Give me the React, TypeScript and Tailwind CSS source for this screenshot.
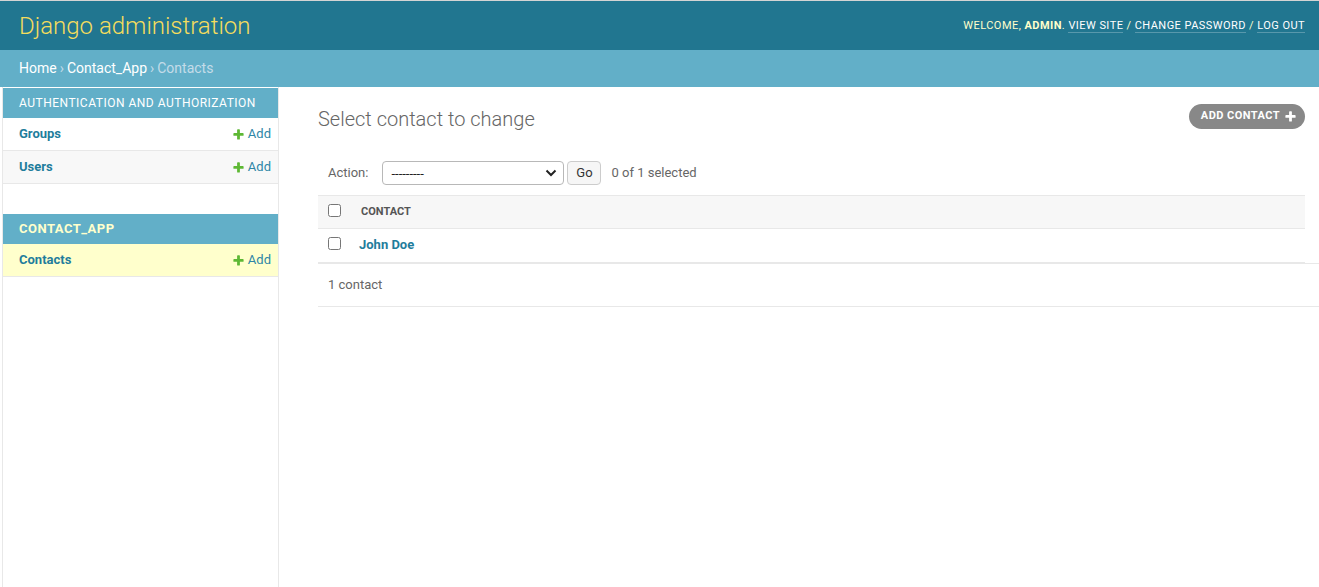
import React from "react";

const Plus = ({ color = "#70bf2b", size = 13 }: { color?: string; size?: number }) => (
  <svg width={size} height={size} viewBox="0 0 1792 1792" className="shrink-0">
    <path
      fill={color}
      d="M1600 796v192q0 40-28 68t-68 28h-416v416q0 40-28 68t-68 28h-192q-40 0-68-28t-28-68v-416h-416q-40 0-68-28t-28-68v-192q0-40 28-68t68-28h416v-416q0-40 28-68t68-28h192q40 0 68 28t28 68v416h416q40 0 68 28t28 68z"
    />
  </svg>
);

const AddLink = () => (
  <a className="flex items-center gap-[3px] text-[13px] text-[#2e86a6]">
    <Plus color="#5eb834" />
    <span>Add</span>
  </a>
);

const SideRow = ({ name, bg }: { name: string; bg: string }) => (
  <div className={`flex h-[33px] items-center justify-between border-b border-[#e8e8e8] pl-[16px] pr-[7px] ${bg}`}>
    <a className="text-[13px] font-bold text-[#1f7d9c]">{name}</a>
    <AddLink />
  </div>
);

const Checkbox = () => (
  <input type="checkbox" className="m-0 h-[13px] w-[13px]" readOnly />
);

export default function App() {
  return (
    <div className="flex min-h-screen flex-col border-t border-[#d4d4d4] bg-white font-['Roboto',sans-serif]">
      <header className="flex h-[49px] items-center justify-between bg-[#217690] pl-[19px] pr-[14px]">
        <div className="text-[24px] font-light leading-none text-[#f5dd5d]">Django administration</div>
        <div className="pt-[2px] text-[11px] uppercase tracking-[0.45px] text-[#ffffcc]">
          Welcome, <strong className="font-bold">admin</strong>.{" "}
          <a className="border-b border-white/25 text-white">View site</a> /{" "}
          <a className="border-b border-white/25 text-white">Change password</a> /{" "}
          <a className="border-b border-white/25 text-white">Log out</a>
        </div>
      </header>
      <div className="flex h-[37px] items-center bg-[#62afc8] pl-[19px] text-[14px] text-white">
        <a>Home</a>
        <span className="mx-[3px] text-[#c4dce8]">›</span>
        <a>Contact_App</a>
        <span className="mx-[3px] text-[#c4dce8]">›</span>
        <span className="text-[#c4dce8]">Contacts</span>
      </div>
      <div className="flex flex-1">
        <div className="w-[3px] border-r border-[#e8e8e8]" />
        <nav className="w-[276px] shrink-0 border-r border-[#e8e8e8] pt-[1px]">
          <div className="mb-[30px]">
            <div className="flex h-[30px] items-center bg-[#62afc8] pl-[16px] text-[12px] uppercase tracking-[0.5px] text-white">
              Authentication and Authorization
            </div>
            <SideRow name="Groups" bg="bg-white" />
            <SideRow name="Users" bg="bg-[#f8f8f8]" />
          </div>
          <div>
            <div className="flex h-[30px] items-center bg-[#62afc8] pl-[16px] text-[13px] font-bold uppercase tracking-[0.5px] text-[#ffffcc]">
              Contact_App
            </div>
            <SideRow name="Contacts" bg="bg-[#ffffcc]" />
          </div>
        </nav>
        <main className="flex-1 pl-[39px] pr-[14px] pt-[17px]">
          <div className="flex items-start justify-between">
            <h1 className="mt-[3px] text-[20px] font-light leading-[24px] text-[#666]">Select contact to change</h1>
            <a className="flex h-[25px] items-center gap-[4px] rounded-full bg-[#888] pb-[1px] pl-[12px] pr-[8px] text-[11px] font-bold uppercase tracking-[0.45px] text-white">
              <span className="pt-[1px]">Add contact</span>
              <Plus color="#fff" size={13} />
            </a>
          </div>
          <div className="mt-[30px] flex h-[24px] items-center pl-[10px] text-[13px] text-[#666]">
            <span>Action:</span>
            <div className="ml-[14px] flex h-[24px] w-[182px] items-center justify-between rounded-[4px] border border-[#b8b8b8] bg-white pl-[8px] pr-[6px] text-[13px] text-[#222]">
              <span className="leading-none">---------</span>
              <svg width="12" height="8" viewBox="0 0 12 8">
                <path d="M1.5 1.5 6 6l4.5-4.5" fill="none" stroke="#222" strokeWidth="2" />
              </svg>
            </div>
            <div className="ml-[3px] flex h-[24px] w-[34px] items-center justify-center rounded-[4px] border border-[#ccc] bg-[#f6f6f6] text-[13px] text-[#333]">
              Go
            </div>
            <span className="ml-[10px]">0 of 1 selected</span>
          </div>
          <div className="mt-[10px]">
            <div className="flex h-[34px] items-center border-y border-[#e8e8e8] bg-[#f7f7f7]">
              <div className="flex w-[33px] items-center pb-[3px] pl-[10px]">
                <Checkbox />
              </div>
              <span className="pl-[10px] text-[11px] font-bold uppercase text-[#555]">Contact</span>
            </div>
            <div className="flex h-[34px] items-center border-b border-[#e8e8e8]">
              <div className="flex w-[33px] items-center pb-[4px] pl-[10px]">
                <Checkbox />
              </div>
              <a className="pb-[2px] pl-[8px] text-[13px] font-bold text-[#1f7d9c]">John Doe</a>
            </div>
          </div>
          <div className="mr-[-14px] border-y border-[#e8e8e8] py-[10px] pl-[10px] text-[13px] leading-[22px] text-[#666]">
            1 contact
          </div>
        </main>
      </div>
    </div>
  );
}
